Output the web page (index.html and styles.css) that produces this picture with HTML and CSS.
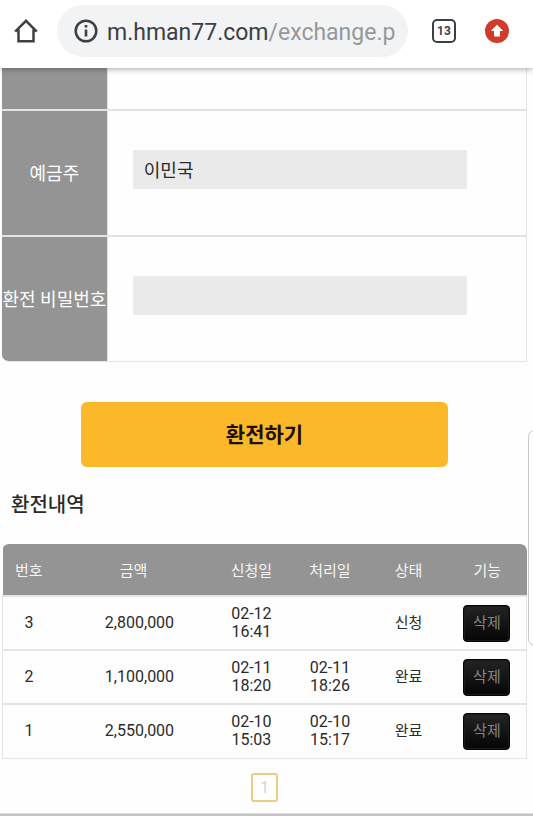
FILE: index.html
```html
<!DOCTYPE html>
<html lang="ko">
<head>
<meta charset="utf-8">
<meta name="viewport" content="width=device-width, initial-scale=1">
<title>환전</title>
<link rel="stylesheet" href="styles.css">
</head>
<body>
<header class="toolbar">
  <button class="icon-button" type="button" aria-label="홈">
    <svg width="24" height="24" viewBox="0 0 24 24"><path d="M4.5 10.5v11.8h15V10.5M1.2 12.6 12 1.8l10.8 10.8" fill="none" stroke="#3c4043" stroke-width="2.5"/></svg>
  </button>
  <button class="address" type="button">
    <svg width="24" height="24" viewBox="0 0 24 24"><circle cx="12" cy="12" r="10.3" fill="none" stroke="#3c4043" stroke-width="2.5"/><path d="M10.7 10.5h2.6v7h-2.6zM10.7 6h2.6v2.6h-2.6z" fill="#3c4043"/></svg>
    <span class="url">m.hman77.com<span class="path">/exchange.p</span></span>
  </button>
  <button class="tabs" type="button">13</button>
  <button class="icon-button update" type="button" aria-label="업데이트">
    <svg width="24" height="24" viewBox="0 0 24 24"><circle cx="12" cy="12" r="12" fill="#d13b2c"/><path d="M12 5.8 18.2 12H15v5.6H9V12H5.8z" fill="#fff"/></svg>
  </button>
</header>
<main class="page">
  <form class="form">
    <div class="fields">
      <div class="row row-cut"><span class="label"></span><div class="value"></div></div>
      <div class="row"><label class="label" for="holder">예금주</label><div class="value"><input id="holder" type="text" value="이민국"></div></div>
      <div class="row"><label class="label" for="pin">환전 비밀번호</label><div class="value"><input id="pin" type="password"></div></div>
    </div>
    <button class="submit" type="button">환전하기</button>
  </form>
  <h2 class="title">환전내역</h2>
  <div class="history">
    <table>
      <colgroup><col class="c-no"><col class="c-amount"><col><col><col><col></colgroup>
      <thead><tr><th>번호</th><th>금액</th><th>신청일</th><th>처리일</th><th>상태</th><th>기능</th></tr></thead>
      <tbody>
        <tr><td>3</td><td class="amount">2,800,000</td><td>02-12<br>16:41</td><td></td><td class="state">신청</td><td><button class="delete" type="button">삭제</button></td></tr>
        <tr><td>2</td><td class="amount">1,100,000</td><td>02-11<br>18:20</td><td>02-11<br>18:26</td><td class="state">완료</td><td><button class="delete" type="button">삭제</button></td></tr>
        <tr><td>1</td><td class="amount">2,550,000</td><td>02-10<br>15:03</td><td>02-10<br>15:17</td><td class="state">완료</td><td><button class="delete" type="button">삭제</button></td></tr>
      </tbody>
    </table>
  </div>
  <nav class="pager"><a href="#">1</a></nav>
</main>
<footer class="footer"></footer>
<aside class="edge-panel"></aside>
</body>
</html>
```
FILE: styles.css
```css
* { box-sizing: border-box; }
body {
  position: relative;
  margin: 0;
  min-height: 100vh;
  overflow-x: hidden;
  background: #fefefe;
  color: #2b2b2b;
  font-family: Roboto, "Noto Sans CJK KR", sans-serif;
  font-size: 16px;
}
button, input { font: inherit; color: inherit; border: 0; }
button { padding: 0; background: none; }
svg { display: block; flex: none; }

.toolbar {
  position: relative;
  display: flex;
  align-items: center;
  height: 68px;
  padding: 0 24px 6px 14px;
  background: #fff;
  box-shadow: 0 1px 6px rgba(0, 0, 0, 0.35);
}
.address {
  display: flex;
  flex: 1;
  align-items: center;
  gap: 9px;
  min-width: 0;
  height: 52px;
  margin: 0 24px 0 19px;
  padding: 0 12px 0 17px;
  border-radius: 26px;
  background: #f1f3f4;
}
.url {
  overflow: hidden;
  padding-top: 2px;
  color: #3c4043;
  font-size: 23px;
  white-space: nowrap;
}
.path { color: #95989b; }
.tabs {
  width: 24px;
  height: 24px;
  border: 2px solid #3c4043;
  border-radius: 5px;
  color: #3c4043;
  font-size: 12px;
  font-weight: 700;
  line-height: 20px;
}
.update { margin-left: 29px; }

.page { padding: 0 6px 0 2px; }
.fields {
  overflow: hidden;
  border-right: 1px solid #e4e4e4;
  border-bottom: 1px solid #e4e4e4;
  border-bottom-left-radius: 7px;
}
.row { display: flex; height: 126px; }
.row + .row { border-top: 2px solid #e3e3e3; }
.row-cut { height: 41px; }
.label {
  display: flex;
  flex: 0 0 20%;
  align-items: center;
  justify-content: center;
  padding-bottom: 3px;
  background: #949494;
  color: #fff;
  font-size: 18px;
  white-space: nowrap;
}
.value {
  flex: 1;
  padding: 39px 0 0 25px;
  border-left: 1px solid #e4e4e4;
}
.value input {
  display: block;
  width: 85%;
  height: 39px;
  padding: 0 11px 2px;
  border-radius: 0;
  background: #eaeaea;
  font-size: 18px;
}
.submit {
  display: block;
  width: 70%;
  height: 65px;
  margin: 40px auto 0;
  padding-bottom: 4px;
  border-radius: 6px;
  background: #fbb829;
  color: #1d0f05;
  font-size: 21px;
  font-weight: 700;
}
.title {
  margin: 22px 0 23px 9px;
  font-size: 20px;
  font-weight: 500;
  line-height: 32px;
}
.history {
  overflow: hidden;
  border-radius: 7px 7px 0 0;
}
table {
  width: 100%;
  border-collapse: collapse;
  table-layout: fixed;
}
.c-no { width: 10%; }
.c-amount { width: 30%; }
th {
  height: 52px;
  padding: 0;
  background: #949494;
  color: #f5f5f5;
  font-size: 15px;
  font-weight: 400;
}
td {
  height: 54px;
  padding: 0;
  line-height: 18px;
  text-align: center;
}
tbody tr {
  border: 1px solid #e4e4e4;
  border-width: 2px 1px 1px;
}
.amount { padding-left: 12px; }
.state, .delete { font-size: 15px; }
.delete {
  width: 47px;
  height: 37px;
  border: 1px solid #050505;
  border-radius: 4px;
  background: linear-gradient(#242424, #050505);
  box-shadow: inset 0 0 0 1px #1c1c1c;
  color: #858585;
  line-height: 18px;
  vertical-align: middle;
}
.pager {
  display: flex;
  justify-content: center;
  padding: 14px 0 11px;
}
.pager a {
  width: 27px;
  height: 29px;
  border: 2px solid #e9cc86;
  border-radius: 3px;
  color: #d5d5d5;
  line-height: 25px;
  text-align: center;
  text-decoration: none;
}
.footer {
  height: 4px;
  border-top: 1px solid #dcdcdc;
  background: #c4c4c4;
}
.edge-panel {
  position: absolute;
  top: 430px;
  right: -8px;
  width: 13px;
  height: 216px;
  border: 1px solid #c9c9c9;
  border-radius: 8px;
  background: #fff;
}
```
